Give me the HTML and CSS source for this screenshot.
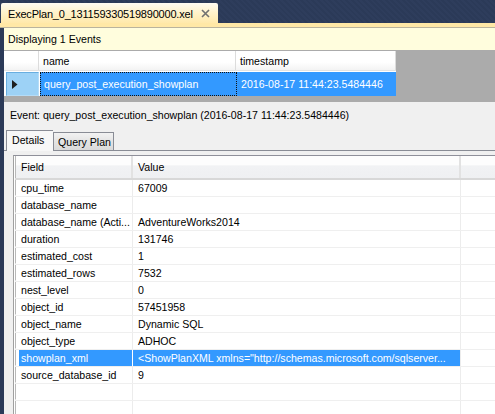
FILE: index.html
```html
<!DOCTYPE html>
<html>
<head>
<meta charset="utf-8">
<link rel="stylesheet" href="styles.css">
</head>
<body>
<div class="app">
  <div class="doctabs">
    <div class="doctab">
      <span class="doctab-title">ExecPlan_0_131159330519890000.xel</span>
      <svg class="close" width="9" height="9" viewBox="0 0 9 9"><path d="M1 1 L8 8 M8 1 L1 8" stroke="#707070" stroke-width="1.6"/></svg>
    </div>
  </div>
  <div class="accent"></div>
  <div class="main">
    <div class="infobar">Displaying 1 Events</div>
    <div class="events-area">
      <div class="events">
        <div class="ev-row ev-head">
          <div class="ev-rh"></div>
          <div class="ev-cell c-name">name</div>
          <div class="ev-cell c-ts">timestamp</div>
        </div>
        <div class="ev-row ev-sel">
          <div class="ev-rh sel"><svg width="6" height="9" viewBox="0 0 6 9"><path d="M0 0 L5.5 4.5 L0 9 Z" fill="#1e1e1e"/></svg></div>
          <div class="ev-cell c-name focus">query_post_execution_showplan</div>
          <div class="ev-cell c-ts">2016-08-17 11:44:23.5484446</div>
        </div>
      </div>
    </div>
    <div class="details-pane">
      <div class="event-title">Event: query_post_execution_showplan (2016-08-17 11:44:23.5484446)</div>
      <div class="tabs">
        <div class="tab active">Details</div>
        <div class="tab">Query Plan</div>
      </div>
      <div class="tabpage">
        <div class="fields">
          <div class="f-row f-head">
            <div class="f-rh"></div>
            <div class="f-cell f-field">Field</div>
            <div class="f-cell f-value">Value</div>
            <div class="f-cell f-fill"></div>
          </div>
          <div class="f-row"><div class="f-rh"></div><div class="f-cell f-field">cpu_time</div><div class="f-cell f-value">67009</div><div class="f-cell f-fill"></div></div>
          <div class="f-row"><div class="f-rh"></div><div class="f-cell f-field">database_name</div><div class="f-cell f-value"></div><div class="f-cell f-fill"></div></div>
          <div class="f-row"><div class="f-rh"></div><div class="f-cell f-field">database_name (Acti...</div><div class="f-cell f-value">AdventureWorks2014</div><div class="f-cell f-fill"></div></div>
          <div class="f-row"><div class="f-rh"></div><div class="f-cell f-field">duration</div><div class="f-cell f-value">131746</div><div class="f-cell f-fill"></div></div>
          <div class="f-row"><div class="f-rh"></div><div class="f-cell f-field">estimated_cost</div><div class="f-cell f-value">1</div><div class="f-cell f-fill"></div></div>
          <div class="f-row"><div class="f-rh"></div><div class="f-cell f-field">estimated_rows</div><div class="f-cell f-value">7532</div><div class="f-cell f-fill"></div></div>
          <div class="f-row"><div class="f-rh"></div><div class="f-cell f-field">nest_level</div><div class="f-cell f-value">0</div><div class="f-cell f-fill"></div></div>
          <div class="f-row"><div class="f-rh"></div><div class="f-cell f-field">object_id</div><div class="f-cell f-value">57451958</div><div class="f-cell f-fill"></div></div>
          <div class="f-row"><div class="f-rh"></div><div class="f-cell f-field">object_name</div><div class="f-cell f-value">Dynamic SQL</div><div class="f-cell f-fill"></div></div>
          <div class="f-row"><div class="f-rh"></div><div class="f-cell f-field">object_type</div><div class="f-cell f-value">ADHOC</div><div class="f-cell f-fill"></div></div>
          <div class="f-row f-sel"><div class="f-rh"></div><div class="f-cell f-field">showplan_xml</div><div class="f-cell f-value">&lt;ShowPlanXML xmlns="http://schemas.microsoft.com/sqlserver...</div><div class="f-cell f-fill"></div></div>
          <div class="f-row"><div class="f-rh"></div><div class="f-cell f-field">source_database_id</div><div class="f-cell f-value">9</div><div class="f-cell f-fill"></div></div>
          <div class="f-row"><div class="f-rh"></div><div class="f-cell f-field"></div><div class="f-cell f-value"></div><div class="f-cell f-fill"></div></div>
          <div class="f-row"><div class="f-rh"></div><div class="f-cell f-field"></div><div class="f-cell f-value"></div><div class="f-cell f-fill"></div></div>
        </div>
      </div>
    </div>
  </div>
</div>
</body>
</html>
```
FILE: styles.css
```css
* { box-sizing: border-box; }
html, body {
  margin: 0;
  padding: 0;
  width: 495px;
  height: 414px;
  overflow: hidden;
}
body {
  background: #2b3a58;
  font-family: "Liberation Sans", Arial, sans-serif;
  font-size: 10.6px;
  color: #000;
}
.app {
  display: flex;
  flex-direction: column;
  height: 414px;
}
.doctabs {
  height: 23px;
  padding-top: 3px;
  padding-left: 1px;
  display: flex;
  background: repeating-linear-gradient(45deg, #2b3a58 0 2px, #2e3d5c 2px 4px);
}
.doctab {
  width: 217px;
  height: 20px;
  border-radius: 2px 2px 0 0;
  background: linear-gradient(#fffcf3, #fff3cd 45%, #ffe9ab);
  display: flex;
  align-items: center;
  padding-left: 7px;
  padding-right: 8px;
  justify-content: space-between;
}
.doctab-title {
  font-size: 11px;
  letter-spacing: -0.2px;
  white-space: nowrap;
  line-height: 14px;
  padding-top: 1px;
}
.close { display: block; margin-top: 1px; }
.accent {
  height: 5px;
  background: #ffe8a6;
  border-bottom: 1px solid #b9b39d;
}
.main {
  flex: 1;
  margin-left: 4px;
  display: flex;
  flex-direction: column;
  min-height: 0;
}
.infobar {
  height: 22px;
  background: #fffddd;
  padding-left: 4px;
  line-height: 22px;
}
.events-area {
  height: 52px;
  background: #ababab;
  padding-top: 1px;
}
.events {
  width: 392px;
  background: #fff;
}
.ev-row {
  display: flex;
}
.ev-head {
  height: 20px;
  background: linear-gradient(#ffffff, #ffffff 60%, #f3f3f3);
  border-bottom: 1px solid #e3e3e3;
}
.ev-head .ev-cell {
  border-right: 1px solid #dcdcdc;
  line-height: 20px;
}
.ev-rh {
  width: 35px;
  flex: none;
  border-right: 1px solid #dcdcdc;
}
.ev-cell {
  padding-left: 4px;
  white-space: nowrap;
  overflow: hidden;
}
.c-name { width: 197px; flex: none; }
.c-ts { flex: 1; }
.ev-sel {
  height: 25px;
  padding-top: 1px;
}
.ev-sel .ev-cell {
  background: #3399ff;
  color: #fff;
  line-height: 24px;
}
.ev-sel .c-name { border-right: 1px solid #3399ff; }
.ev-rh.sel {
  margin-left: 2px;
  width: 33px;
  background: #9dd2f6;
  border: 1px solid #68aee0;
  border-right-color: #b5dcf7;
  border-bottom-color: #b5dcf7;
  display: flex;
  align-items: center;
  padding-left: 5px;
  margin-right: 1px;
}
.ev-cell.focus {
  outline: 1px dotted #111;
  outline-offset: -1px;
}
.details-pane {
  flex: 1;
  background: #f0f0f0;
  display: flex;
  flex-direction: column;
  min-height: 0;
}
.event-title {
  padding-left: 6px;
  padding-top: 7px;
  height: 28px;
  line-height: 13px;
  white-space: nowrap;
}
.tabs {
  display: flex;
  align-items: flex-end;
  height: 21px;
  padding-left: 2px;
  border-bottom: 1px solid #898c95;
}
.tab {
  height: 18px;
  padding: 0 5px;
  border: 1px solid #898c95;
  border-bottom: none;
  background: linear-gradient(#f2f2f2, #e4e4e4 50%, #dadada);
  line-height: 18px;
  white-space: nowrap;
  flex: none;
}
.tab.active {
  height: 21px;
  width: 47px;
  background: #f7f7f7;
  border-right: none;
  margin-bottom: -1px;
  line-height: 19px;
  padding-left: 5px;
  position: relative;
  z-index: 1;
}
.tab:not(.active) { width: 61px; padding-left: 4px; }
.tabpage {
  flex: 1;
  padding-top: 4px;
  padding-left: 9px;
  min-height: 0;
  overflow: hidden;
}
.fields {
  background: #fff;
  border-top: 1px solid #8f909a;
  border-left: 1px solid #a0a0a0;
  height: 100%;
  padding-left: 1px;
}
.f-row {
  display: flex;
  height: 17px;
  border-bottom: 1px solid #efefef;
}
.f-head {
  height: 24px;
  border-bottom: 2px solid #d8d8d8;
  background: linear-gradient(#fdfdfd, #fdfdfd 40%, #f1f2f4 45%, #eff0f2);
}
.f-rh {
  width: 4px;
  flex: none;
  border-left: 1px solid #b8b8b8;
  border-bottom: 1px solid #fff;
}
.f-head .f-rh { border-bottom: none; }
.f-cell {
  white-space: nowrap;
  overflow: hidden;
  line-height: 16px;
  border-right: 1px solid #ececec;
}
.f-head .f-cell {
  line-height: 22px;
  border-right: 2px solid #e2e2e2;
}
.f-field { width: 114px; flex: none; padding-left: 2px; }
.f-value { width: 328px; flex: none; padding-left: 5px; }
.f-head .f-field { padding-left: 2px; }
.f-fill { flex: 1; border-right: none; }
.f-head .f-fill { border-right: none; }
.f-sel .f-field, .f-sel .f-value {
  background: #3399ff;
  color: #fff;
}
.f-sel .f-field { border-right: 1px solid #fff; }
.f-sel .f-value { border-right: 1px solid #ececec; }
```
